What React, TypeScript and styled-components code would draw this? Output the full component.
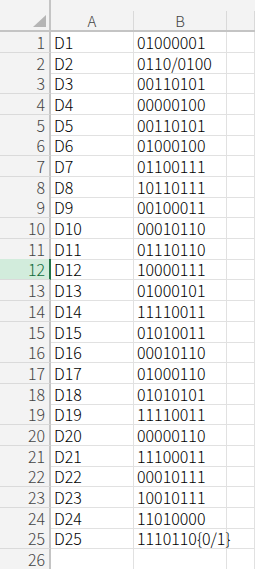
import React from "react";
import styled, { createGlobalStyle } from "styled-components";

const Global = createGlobalStyle`
  html, body { margin: 0; padding: 0; background: #ffffff; overflow: hidden; }
  body { font-family: "Noto Sans CJK JP", "Noto Sans", sans-serif; }
`;

const COLS = "51px 83px 93px 1fr";

const Sheet = styled.div`
  width: 255px;
  height: 569px;
  overflow: hidden;
  display: flex;
  flex-direction: column;
`;

const HeaderRow = styled.div`
  display: grid;
  grid-template-columns: ${COLS};
  height: 32px;
  box-sizing: border-box;
  background: #f3f3f3;
  border-bottom: 2px solid #c4c4c4;
  flex: none;
`;

const Corner = styled.div`
  box-sizing: border-box;
  border-right: 2px solid #c4c4c4;
  display: flex;
  justify-content: flex-end;
  align-items: flex-end;
  padding: 0 3px 3px 0;
`;

const ColHead = styled.div`
  box-sizing: border-box;
  margin-top: 11px;
  border-right: 1px solid #d9d9d9;
  display: flex;
  align-items: center;
  justify-content: center;
  font-size: 15px;
  font-weight: 300;
  color: #444444;
  line-height: 19px;
`;

const Row = styled.div<{ $h: number }>`
  display: grid;
  grid-template-columns: ${COLS};
  height: ${(p) => p.$h}px;
  flex: none;
`;

const RowHead = styled.div<{ $sel?: boolean }>`
  box-sizing: border-box;
  background: ${(p) => (p.$sel ? "#d2ecdc" : "#f3f3f3")};
  border-right: 2px solid ${(p) => (p.$sel ? "#217346" : "#c4c4c4")};
  border-bottom: 1px solid #dadada;
  color: ${(p) => (p.$sel ? "#0f6b3a" : "#444444")};
  font-size: 16px;
  font-weight: 300;
  line-height: 20px;
  text-align: right;
  padding-right: 4px;
  white-space: nowrap;
`;

const Cell = styled.div`
  box-sizing: border-box;
  border-right: 1px solid #e1e1e1;
  border-bottom: 1px solid #e1e1e1;
  color: #000000;
  font-size: 16px;
  font-weight: 300;
  line-height: 20px;
  padding-left: 3px;
  white-space: nowrap;
`;

const data: [string, string][] = [
  ["D1", "01000001"],
  ["D2", "0110/0100"],
  ["D3", "00110101"],
  ["D4", "00000100"],
  ["D5", "00110101"],
  ["D6", "01000100"],
  ["D7", "01100111"],
  ["D8", "10110111"],
  ["D9", "00100011"],
  ["D10", "00010110"],
  ["D11", "01110110"],
  ["D12", "10000111"],
  ["D13", "01000101"],
  ["D14", "11110011"],
  ["D15", "01010011"],
  ["D16", "00010110"],
  ["D17", "01000110"],
  ["D18", "01010101"],
  ["D19", "11110011"],
  ["D20", "00000110"],
  ["D21", "11100011"],
  ["D22", "00010111"],
  ["D23", "10010111"],
  ["D24", "11010000"],
  ["D25", "1110110{0/1}"],
  ["", ""],
];

const PITCH = 20.68;
const START = 32;
const boundary = (i: number) => Math.round(START + i * PITCH);

export default function App() {
  return (
    <>
      <Global />
      <Sheet>
        <HeaderRow>
          <Corner>
            <svg width="13" height="12" viewBox="0 0 13 12">
              <polygon points="13,0 13,12 0,12" fill="#b5b5b5" />
            </svg>
          </Corner>
          <ColHead>A</ColHead>
          <ColHead>B</ColHead>
          <ColHead />
        </HeaderRow>
        {data.map(([a, b], i) => (
          <Row key={i} $h={i === 25 ? 30 : boundary(i + 1) - boundary(i)}>
            <RowHead $sel={i === 11}>{i + 1}</RowHead>
            <Cell>{a}</Cell>
            <Cell>{b}</Cell>
            <Cell />
          </Row>
        ))}
      </Sheet>
    </>
  );
}
